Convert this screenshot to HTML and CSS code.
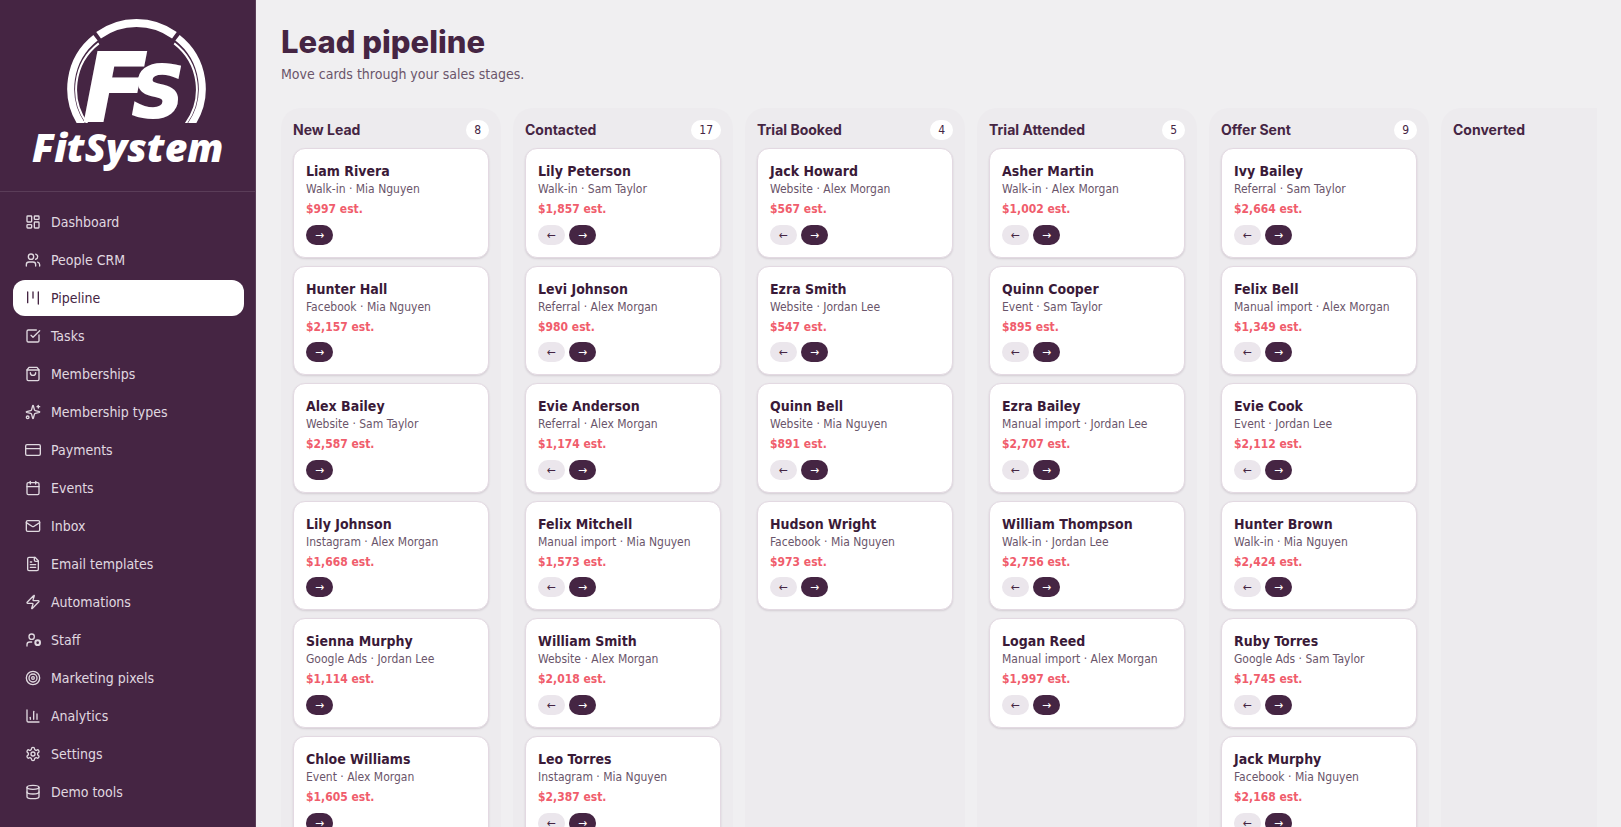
FILE: index.html
```html
<!DOCTYPE html>
<html lang="en">
<head>
    <meta charset="UTF-8">
    <meta name="viewport" content="width=device-width, initial-scale=1.0">
    <title>Lead pipeline - FitSystem</title>
    <link rel="stylesheet" href="styles.css">
</head>
<body>
    <div class="app">
        <aside class="sidebar">
            <div class="brand">
                <svg class="logo" viewBox="30 16 200 160" role="img" aria-label="FitSystem">
                    <clipPath id="ring-cut"><rect x="60" y="16" width="154" height="107"/></clipPath>
                    <g clip-path="url(#ring-cut)" fill="none" stroke="#fff" stroke-width="8">
                        <path d="M98.6 35.3A64.5 64.5 0 0 1 174.4 35.3"/>
                        <path stroke-width="7" d="M95.5 37.7A64.5 64.5 0 0 0 82.4 125.5"/>
                        <path stroke-width="7" d="M177.5 37.7A64.5 64.5 0 0 1 190.6 125.5"/>
                        <path stroke-width="2" d="M98.8 43.4A58 58 0 0 0 88.7 125.5"/>
                        <path stroke-width="2" d="M174.2 43.4A58 58 0 0 1 184.3 125.5"/>
                    </g>
                    <text class="logo-mark" x="83" y="121" font-size="94">F</text>
                    <text class="logo-mark" x="132" y="117" font-size="72">S</text>
                    <text class="logo-name" x="32" y="162" font-size="39">FitSystem</text>
                </svg>
            </div>
            <nav class="nav" id="nav"></nav>
        </aside>

        <main class="main">
            <h1>Lead pipeline</h1>
            <p class="subtitle">Move cards through your sales stages.</p>
            <div class="board" id="board"></div>
        </main>
    </div>

    <script>
        const navItems = [
            ['Dashboard', '<rect width="7" height="9" x="3" y="3" rx="1"/><rect width="7" height="5" x="14" y="3" rx="1"/><rect width="7" height="9" x="14" y="12" rx="1"/><rect width="7" height="5" x="3" y="16" rx="1"/>'],
            ['People CRM', '<path d="M16 21v-2a4 4 0 0 0-4-4H6a4 4 0 0 0-4 4v2"/><circle cx="9" cy="7" r="4"/><path d="M22 21v-2a4 4 0 0 0-3-3.87"/><path d="M16 3.13a4 4 0 0 1 0 7.75"/>'],
            ['Pipeline', '<path d="M4 3v16"/><path d="M12 3v9"/><path d="M20 3v18"/>'],
            ['Tasks', '<path d="M21 10.5V19a2 2 0 0 1-2 2H5a2 2 0 0 1-2-2V5a2 2 0 0 1 2-2h12"/><path d="m9 11 3 3L22 4"/>'],
            ['Memberships', '<path d="M6 2 3 6v14a2 2 0 0 0 2 2h14a2 2 0 0 0 2-2V6l-3-4Z"/><path d="M3 6h18"/><path d="M16 10a4 4 0 0 1-8 0"/>'],
            ['Membership types', '<path d="M9.94 15.5A2 2 0 0 0 8.5 14.06l-6.14-1.58a.5.5 0 0 1 0-.96L8.5 9.94A2 2 0 0 0 9.94 8.5l1.58-6.14a.5.5 0 0 1 .96 0l1.58 6.14a2 2 0 0 0 1.44 1.44l6.14 1.58a.5.5 0 0 1 0 .96l-6.14 1.58a2 2 0 0 0-1.44 1.44l-1.58 6.14a.5.5 0 0 1-.96 0z"/><path d="M20 2v4"/><path d="M22 4h-4"/><circle cx="4" cy="20" r="2"/>'],
            ['Payments', '<rect width="22" height="16" x="1" y="4" rx="2"/><path d="M1 10h22"/>'],
            ['Events', '<path d="M8 2v4"/><path d="M16 2v4"/><rect width="18" height="18" x="3" y="4" rx="2"/><path d="M3 10h18"/>'],
            ['Inbox', '<rect width="20" height="16" x="2" y="4" rx="2"/><path d="m22 7-8.97 5.7a1.94 1.94 0 0 1-2.06 0L2 7"/>'],
            ['Email templates', '<path d="M15 2H6a2 2 0 0 0-2 2v16a2 2 0 0 0 2 2h12a2 2 0 0 0 2-2V7Z"/><path d="M14 2v4a2 2 0 0 0 2 2h4"/><path d="M10 9H8"/><path d="M16 13H8"/><path d="M16 17H8"/>'],
            ['Automations', '<path d="M4 14a1 1 0 0 1-.78-1.63l9.9-10.2a.5.5 0 0 1 .86.46l-1.92 6.02A1 1 0 0 0 13 10h7a1 1 0 0 1 .78 1.63l-9.9 10.2a.5.5 0 0 1-.86-.46l1.92-6.02A1 1 0 0 0 11 14z"/>'],
            ['Staff', '<circle cx="10" cy="7" r="4"/><path d="M10 15H7a4 4 0 0 0-4 4v2"/><circle cx="19" cy="16" r="3.5" stroke-width="3"/>'],
            ['Marketing pixels', '<circle cx="12" cy="12" r="10"/><circle cx="12" cy="12" r="6"/><circle cx="12" cy="12" r="2"/>'],
            ['Analytics', '<path d="M3 3v16a2 2 0 0 0 2 2h16"/><path d="M18 17V9"/><path d="M13 17V5"/><path d="M8 17v-3"/>'],
            ['Settings', '<path d="M12.22 2h-.44a2 2 0 0 0-2 2v.18a2 2 0 0 1-1 1.73l-.43.25a2 2 0 0 1-2 0l-.15-.08a2 2 0 0 0-2.73.73l-.22.38a2 2 0 0 0 .73 2.73l.15.1a2 2 0 0 1 1 1.72v.51a2 2 0 0 1-1 1.74l-.15.09a2 2 0 0 0-.73 2.73l.22.38a2 2 0 0 0 2.73.73l.15-.08a2 2 0 0 1 2 0l.43.25a2 2 0 0 1 1 1.73V20a2 2 0 0 0 2 2h.44a2 2 0 0 0 2-2v-.18a2 2 0 0 1 1-1.73l.43-.25a2 2 0 0 1 2 0l.15.08a2 2 0 0 0 2.73-.73l.22-.39a2 2 0 0 0-.73-2.73l-.15-.08a2 2 0 0 1-1-1.74v-.5a2 2 0 0 1 1-1.74l.15-.09a2 2 0 0 0 .73-2.73l-.22-.38a2 2 0 0 0-2.73-.73l-.15.08a2 2 0 0 1-2 0l-.43-.25a2 2 0 0 1-1-1.73V4a2 2 0 0 0-2-2z"/><circle cx="12" cy="12" r="3"/>'],
            ['Demo tools', '<ellipse cx="12" cy="5" rx="9" ry="3"/><path d="M3 5v14a9 3 0 0 0 18 0V5"/><path d="M3 12a9 3 0 0 0 18 0"/>']
        ];

        const stages = [
            { name: 'New Lead', count: 8, leads: [
                ['Liam Rivera', 'Walk-in', 'Mia Nguyen', 997],
                ['Hunter Hall', 'Facebook', 'Mia Nguyen', 2157],
                ['Alex Bailey', 'Website', 'Sam Taylor', 2587],
                ['Lily Johnson', 'Instagram', 'Alex Morgan', 1668],
                ['Sienna Murphy', 'Google Ads', 'Jordan Lee', 1114],
                ['Chloe Williams', 'Event', 'Alex Morgan', 1605]
            ] },
            { name: 'Contacted', count: 17, leads: [
                ['Lily Peterson', 'Walk-in', 'Sam Taylor', 1857],
                ['Levi Johnson', 'Referral', 'Alex Morgan', 980],
                ['Evie Anderson', 'Referral', 'Alex Morgan', 1174],
                ['Felix Mitchell', 'Manual import', 'Mia Nguyen', 1573],
                ['William Smith', 'Website', 'Alex Morgan', 2018],
                ['Leo Torres', 'Instagram', 'Mia Nguyen', 2387]
            ] },
            { name: 'Trial Booked', count: 4, leads: [
                ['Jack Howard', 'Website', 'Alex Morgan', 567],
                ['Ezra Smith', 'Website', 'Jordan Lee', 547],
                ['Quinn Bell', 'Website', 'Mia Nguyen', 891],
                ['Hudson Wright', 'Facebook', 'Mia Nguyen', 973]
            ] },
            { name: 'Trial Attended', count: 5, leads: [
                ['Asher Martin', 'Walk-in', 'Alex Morgan', 1002],
                ['Quinn Cooper', 'Event', 'Sam Taylor', 895],
                ['Ezra Bailey', 'Manual import', 'Jordan Lee', 2707],
                ['William Thompson', 'Walk-in', 'Jordan Lee', 2756],
                ['Logan Reed', 'Manual import', 'Alex Morgan', 1997]
            ] },
            { name: 'Offer Sent', count: 9, leads: [
                ['Ivy Bailey', 'Referral', 'Sam Taylor', 2664],
                ['Felix Bell', 'Manual import', 'Alex Morgan', 1349],
                ['Evie Cook', 'Event', 'Jordan Lee', 2112],
                ['Hunter Brown', 'Walk-in', 'Mia Nguyen', 2424],
                ['Ruby Torres', 'Google Ads', 'Sam Taylor', 1745],
                ['Jack Murphy', 'Facebook', 'Mia Nguyen', 2168]
            ] },
            { name: 'Converted', count: 0, leads: [] }
        ];

        function renderNav() {
            document.getElementById('nav').innerHTML = navItems.map(([label, icon]) => `
                <a href="#" class="nav-item${label === 'Pipeline' ? ' active' : ''}">
                    <svg class="icon" viewBox="0 0 24 24" aria-hidden="true">${icon}</svg>
                    <span>${label}</span>
                </a>`).join('');
        }

        function renderCard([name, source, owner, value], stageIndex) {
            // the first stage has nothing to move back to
            const back = stageIndex > 0 ? '<button class="move back" aria-label="Move back">←</button>' : '';
            return `
                <article class="card">
                    <h3>${name}</h3>
                    <p class="meta">${source} · ${owner}</p>
                    <p class="value">$${value.toLocaleString('en-US')} est.</p>
                    <div class="moves">${back}<button class="move" aria-label="Move forward">→</button></div>
                </article>`;
        }

        function renderBoard() {
            document.getElementById('board').innerHTML = stages.map((stage, i) => `
                <section class="column">
                    <header class="column-header">
                        <h2>${stage.name}</h2>
                        <span class="count">${stage.count}</span>
                    </header>
                    ${stage.leads.map(lead => renderCard(lead, i)).join('')}
                </section>`).join('');
        }

        renderNav();
        renderBoard();
    </script>
</body>
</html>
```
FILE: styles.css
```css
* {
    box-sizing: border-box;
}
body {
    margin: 0;
    font-family: "DejaVu Sans Condensed", "DejaVu Sans", sans-serif;
    font-size: 14px;
    line-height: 20px;
    background-color: #f0eff1;
    color: #452543;
}
h1, h2, h3, p {
    margin: 0;
}
.app {
    display: flex;
    height: 100vh;
}

/* Sidebar */
.sidebar {
    flex: 0 0 256px;
    background-color: #452543;
    border-right: 1px solid #5a3d58;
    overflow: hidden;
}
.brand {
    padding: 16px 24px 15px 30px;
    border-bottom: 1px solid #5a3d58;
}
.logo {
    display: block;
    width: 200px;
    height: 160px;
}
.logo-mark {
    font-family: "DejaVu Sans", sans-serif;
    font-weight: 700;
    font-style: italic;
    fill: #fff;
    stroke: #fff;
    stroke-width: 2px;
}
.logo-name {
    font-family: "Open Sans", "Noto Sans", sans-serif;
    font-weight: 800;
    font-style: italic;
    fill: #fff;
}
.nav {
    display: flex;
    flex-direction: column;
    gap: 2px;
    padding: 12px 11px 12px 13px;
}
.nav-item {
    display: flex;
    align-items: center;
    gap: 10px;
    padding: 8px 12px;
    border-radius: 12px;
    color: #e0d9e0;
    text-decoration: none;
}
.nav-item.active {
    background-color: #fff;
    color: #452543;
}
.icon {
    width: 16px;
    height: 16px;
    fill: none;
    stroke: currentColor;
    stroke-width: 2;
    stroke-linecap: round;
    stroke-linejoin: round;
}

/* Board */
.main {
    flex: 1;
    min-width: 0;
    padding: 24px 24px 24px 25px;
    overflow-y: auto;
    scrollbar-width: none;
}
h1 {
    font-family: Inter, sans-serif;
    font-size: 31px;
    font-weight: 800;
    line-height: 36px;
}
.subtitle {
    margin-top: 4px;
    color: #6a556a;
}
.board {
    display: flex;
    gap: 12px;
    margin-top: 24px;
    overflow-x: auto;
    scrollbar-width: none;
}
.column {
    display: flex;
    flex-direction: column;
    flex: 0 0 220px;
    gap: 8px;
    padding: 12px;
    border-radius: 20px;
    background-color: #edebee;
}
.column-header {
    display: flex;
    align-items: center;
    justify-content: space-between;
}
h2 {
    font-family: Inter, sans-serif;
    font-size: 14px;
    font-weight: 700;
    line-height: 20px;
}
.count {
    padding: 2px 8px;
    border-radius: 10px;
    background-color: #fff;
    font-size: 12px;
    line-height: 16px;
}
.card {
    padding: 12px;
    border: 1px solid #e3d9e2;
    border-radius: 12px;
    background-color: #fff;
    box-shadow: 0 1px 2px rgba(69, 37, 67, 0.15);
}
h3 {
    font-size: 14px;
    font-weight: 700;
    line-height: 20px;
    color: #3a1a38;
}
.meta {
    font-size: 12px;
    line-height: 16px;
    color: #6a556a;
}
.value {
    margin-top: 5px;
    font-size: 12px;
    font-weight: 700;
    line-height: 1.3;
    color: #f05d6c;
}
.moves {
    display: flex;
    gap: 4px;
    margin-top: 7px;
}
.move {
    padding: 2px 9px;
    border: 0;
    border-radius: 10px;
    background-color: #452543;
    color: #fff;
    font: inherit;
    font-size: 12px;
    line-height: 16px;
    cursor: pointer;
}
.move.back {
    background-color: #ebe6ec;
    color: #452543;
}
```
